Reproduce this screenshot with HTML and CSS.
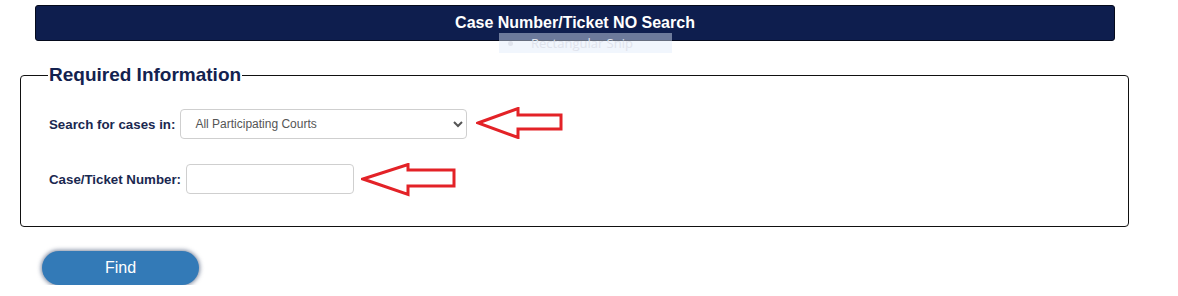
FILE: index.html
```html
<!DOCTYPE html>
<html>
<head>
<meta name="viewport" content="width=device-width, initial-scale=1">
<link rel="stylesheet" href="styles.css">
</head>
<body>

<div class="page">
  <div class="title-bar">Case Number/Ticket NO Search</div>

  <fieldset class="card">
    <legend>Required Information</legend>

    <div class="row">
      <label for="court">Search for cases in:</label>
      <select id="court" class="field field--select">
        <option>All Participating Courts</option>
      </select>
      <svg class="arrow" width="88" height="32" viewBox="0 0 88 32">
        <polygon points="2,16 42,1.5 42,8 85,8 85,22 42,22 42,30.5" fill="none" stroke="#e32227" stroke-width="3" stroke-linejoin="miter"/>
      </svg>
    </div>

    <div class="row row--second">
      <label for="ticket">Case/Ticket Number:</label>
      <input type="text" id="ticket" class="field field--text">
      <svg class="arrow arrow--second" width="96" height="34" viewBox="0 0 96 34">
        <polygon points="2,16 47,1.5 47,7 93,7 93,23 47,23 47,31.5" fill="none" stroke="#e32227" stroke-width="3" stroke-linejoin="miter"/>
      </svg>
    </div>
  </fieldset>

  <button class="button" value="Find">Find</button>

  <div class="snip"><span class="snip__dot"></span>Rectangular Snip</div>
</div>

</body>
</html>
```

FILE: styles.css
```css
body {
  margin: 0;
  background: #fff;
  font-family: "Liberation Sans", Arial, sans-serif;
}

.page {
  position: relative;
  padding-top: 5px;
}

.title-bar {
  margin-left: 35px;
  width: 1078px;
  height: 34px;
  line-height: 33px;
  background: #0e1e4e;
  border: 1px solid #050a1c;
  border-radius: 3px;
  color: #fff;
  font-size: 16px;
  font-weight: bold;
  text-align: center;
}

.card {
  margin: 23px 0 0 20px;
  width: 1109px;
  box-sizing: border-box;
  height: 163px;
  padding: 23px 28px 0 28px;
  border: 1px solid #111;
  border-radius: 4px;
  display: flex;
  flex-direction: column;
}

.card legend {
  padding: 0 1px;
  margin-left: -1px;
  color: #13224f;
  font-size: 19px;
  font-weight: bold;
}

.row {
  display: flex;
  align-items: center;
}

.row--second {
  margin-top: 22px;
}

.row label {
  color: #1a2850;
  font-size: 13.3px;
  font-weight: bold;
  margin-right: 5px;
}

.field {
  box-sizing: border-box;
  height: 30px;
  border: 1px solid #cfcfcf;
  border-radius: 4px;
  background: #fff;
  font-family: "Liberation Sans", Arial, sans-serif;
  font-size: 12px;
  color: #555;
}

.field--select {
  width: 287px;
  padding-left: 10px;
}

.field--text {
  width: 168px;
}

.arrow {
  margin-left: 9px;
  margin-top: -3px;
}

.arrow--second {
  margin-left: 7px;
  margin-top: 2px;
}

.button {
  margin: 24px 0 0 42px;
  width: 157px;
  height: 34px;
  border: none;
  border-radius: 17px;
  background-color: #337ab7;
  box-shadow: 0 0 4px 1px rgba(20, 40, 80, 0.55);
  color: #fff;
  font-family: "Liberation Sans", Arial, sans-serif;
  font-size: 16px;
  cursor: pointer;
}

.snip {
  position: absolute;
  left: 499px;
  top: 33px;
  width: 173px;
  height: 20px;
  background: rgba(225, 234, 250, 0.45);
  color: #dfe3ec;
  font-family: "Open Sans", sans-serif;
  font-size: 13px;
  line-height: 20px;
  display: flex;
  align-items: center;
}

.snip__dot {
  width: 5px;
  height: 5px;
  border-radius: 50%;
  background: #dfe3ec;
  margin: 0 18px 0 9px;
}
```
